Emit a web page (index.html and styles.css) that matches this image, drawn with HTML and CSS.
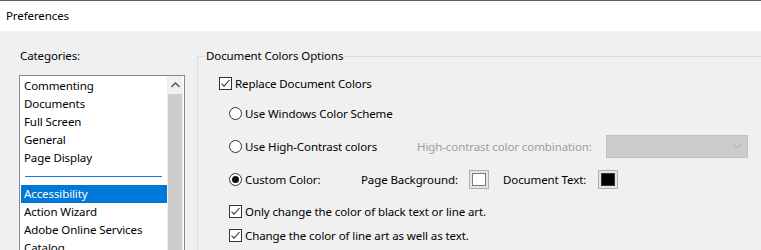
FILE: index.html
```html
<!DOCTYPE html>
<html lang="en">
<head>
    <meta charset="UTF-8">
    <title>Preferences</title>
    <link rel="stylesheet" href="styles.css">
</head>
<body>
    <div class="titlebar">Preferences</div>

    <div class="dialog">
        <!-- Left: categories list -->
        <div class="categories">
            <div class="cat-label">Categories:</div>
            <div class="listbox">
                <ul class="list-items">
                    <li>Commenting</li>
                    <li>Documents</li>
                    <li>Full Screen</li>
                    <li>General</li>
                    <li>Page Display</li>
                    <li class="separator"><span></span></li>
                    <li class="selected">Accessibility</li>
                    <li>Action Wizard</li>
                    <li>Adobe Online Services</li>
                    <li>Catalog</li>
                    <li>Color Management</li>
                </ul>
                <div class="scrollbar">
                    <div class="scroll-up">
                        <svg width="9" height="6" viewBox="0 0 9 6"><polyline points="0.5,5 4.5,1 8.5,5" fill="none" stroke="#606060" stroke-width="1.6"/></svg>
                    </div>
                    <div class="scroll-thumb"></div>
                </div>
            </div>
        </div>

        <!-- Right: options group -->
        <fieldset class="group">
            <legend>Document Colors Options</legend>

            <div class="row row-replace">
                <span class="check"><svg width="13" height="13" viewBox="0 0 13 13"><rect x="0.5" y="0.5" width="12" height="12" fill="#fff" stroke="#333"/><polyline points="2.5,6.5 5,9.2 10.5,3" fill="none" stroke="#333" stroke-width="1.1"/></svg></span>
                <span>Replace Document Colors</span>
            </div>

            <div class="row row-windows indent">
                <span class="radio"></span>
                <span>Use Windows Color Scheme</span>
            </div>

            <div class="row row-contrast indent">
                <span class="radio"></span>
                <span class="contrast-label">Use High-Contrast colors</span>
                <span class="disabled">High-contrast color combination:</span>
                <div class="dropdown">
                    <svg width="11" height="6" viewBox="0 0 11 6"><polyline points="0.5,0.5 5.5,5 10.5,0.5" fill="none" stroke="#a8a8a8" stroke-width="1"/></svg>
                </div>
            </div>

            <div class="row row-custom indent">
                <span class="radio checked"></span>
                <span class="custom-label">Custom Color:</span>
                <span class="bg-label">Page Background:</span>
                <span class="swatch bg-swatch"><span class="swatch-inner"></span></span>
                <span class="text-label">Document Text:</span>
                <span class="swatch text-swatch"><span class="swatch-inner"></span></span>
            </div>

            <div class="row row-black indent">
                <span class="check"><svg width="13" height="13" viewBox="0 0 13 13"><rect x="0.5" y="0.5" width="12" height="12" fill="#fff" stroke="#333"/><polyline points="2.5,6.5 5,9.2 10.5,3" fill="none" stroke="#333" stroke-width="1.1"/></svg></span>
                <span>Only change the color of black text or line art.</span>
            </div>

            <div class="row row-lineart indent">
                <span class="check"><svg width="13" height="13" viewBox="0 0 13 13"><rect x="0.5" y="0.5" width="12" height="12" fill="#fff" stroke="#333"/><polyline points="2.5,6.5 5,9.2 10.5,3" fill="none" stroke="#333" stroke-width="1.1"/></svg></span>
                <span>Change the color of line art as well as text.</span>
            </div>
        </fieldset>
    </div>
</body>
</html>
```

FILE: styles.css
```css
* {
    box-sizing: border-box;
    margin: 0;
    padding: 0;
}

body {
    width: 761px;
    height: 250px;
    overflow: hidden;
    background: #f0f0f0;
    font-family: "Noto Sans", "Segoe UI", sans-serif;
    font-size: 11.5px;
    letter-spacing: -0.1px;
    color: #000;
}

/* Title bar */
.titlebar {
    height: 31px;
    background: #fff;
    border-top: 1px solid #5f5f5f;
    padding-left: 6px;
    line-height: 30px;
}

.dialog {
    display: flex;
    align-items: flex-start;
    padding-top: 17px;
}

/* Categories */
.categories {
    padding-left: 19px;
    width: 197px;
    flex-shrink: 0;
}

.cat-label {
    padding-left: 1px;
    line-height: 16px;
    margin-bottom: 11px;
}

.listbox {
    width: 166px;
    height: 300px;
    border: 1px solid #828790;
    background: #fff;
    display: flex;
}

.list-items {
    list-style: none;
    width: 147px;
    padding-top: 1px;
}

.list-items li {
    height: 18px;
    line-height: 18px;
    margin-left: 1px;
    padding-left: 3px;
    white-space: nowrap;
}

.list-items li.selected {
    background: #0078d7;
    color: #fff;
}

.list-items li.separator {
    display: flex;
    align-items: center;
    padding: 0 4px 0 4px;
}

.separator span {
    display: block;
    width: 137px;
    height: 1px;
    background: #1e78c8;
}

.scrollbar {
    width: 16px;
    background: #f0f0f0;
    display: flex;
    flex-direction: column;
}

.scroll-up {
    height: 18px;
    display: flex;
    align-items: center;
    justify-content: center;
}

.scroll-thumb {
    flex: 1;
    margin: 0 1px;
    background: #cdcdcd;
}

/* Options group */
.group {
    flex: 1;
    margin-right: -20px;
    border: 1px solid #dcdcdc;
    padding: 9px 0 0 21px;
    height: 260px;
}

.group legend {
    margin-left: -14px;
    padding: 0 1px 0 1px;
    line-height: 16px;
}

.row {
    display: flex;
    align-items: center;
    height: 20px;
    white-space: nowrap;
}

.indent {
    padding-left: 10px;
}

.check {
    display: flex;
    width: 13px;
    height: 13px;
    margin-right: 3px;
}

.radio {
    width: 13px;
    height: 13px;
    border: 1px solid #333;
    border-radius: 50%;
    background: #fff;
    margin-right: 3px;
    display: flex;
    align-items: center;
    justify-content: center;
}

.radio.checked::after {
    content: "";
    width: 7px;
    height: 7px;
    border-radius: 50%;
    background: #111;
}

.row-windows {
    margin-top: 10px;
}

.row-contrast {
    margin-top: 11px;
    height: 24px;
}

.contrast-label {
    width: 172px;
}

.disabled {
    color: #9d9d9d;
    width: 189px;
}

.dropdown {
    width: 142px;
    height: 23px;
    background: #cccccc;
    border: 1px solid #bfbfbf;
    display: flex;
    align-items: center;
    justify-content: flex-end;
    padding-right: 4px;
}

.row-custom {
    margin-top: 11px;
}

.custom-label {
    width: 116px;
}

.bg-label {
    width: 108px;
}

.text-label {
    width: 95px;
}

.swatch {
    width: 20px;
    height: 19px;
    border: 1px solid #adadad;
    background: #e5e5e5;
    padding: 2px;
    margin-right: 14px;
    display: flex;
}

.swatch-inner {
    flex: 1;
    border: 1px solid #7a7a7a;
}

.bg-swatch .swatch-inner {
    background: #fff;
}

.text-swatch .swatch-inner {
    background: #000;
    border-color: #333;
}

.row-black {
    margin-top: 12px;
}

.row-lineart {
    margin-top: 4px;
}
```
